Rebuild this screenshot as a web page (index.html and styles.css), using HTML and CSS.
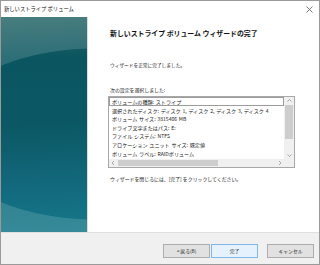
FILE: index.html
```html
<!DOCTYPE html>
<html lang="ja">
<head>
    <meta charset="UTF-8">
    <title>新しいストライプ ボリューム</title>
    <link rel="stylesheet" href="styles.css">
</head>
<body>
    <div class="window">
        <div class="titlebar">
            <span class="title">新しいストライプ ボリューム</span>
            <svg class="close" width="7" height="7" viewBox="0 0 7 7">
                <path d="M0.5 0.5 L6.5 6.5 M6.5 0.5 L0.5 6.5" stroke="#555" stroke-width="0.8" fill="none"/>
            </svg>
        </div>

        <div class="main">
            <div class="side"></div>
            <div class="content">
                <h1 class="heading">新しいストライプ ボリューム ウィザードの完了</h1>
                <p class="text done">ウィザードを正常に完了しました。</p>
                <p class="text chosen">次の設定を選択しました:</p>

                <div class="listbox">
                    <ul class="items">
                        <li class="item focused">ボリュームの種類: ストライプ</li>
                        <li class="item">選択されたディスク: ディスク 1, ディスク 2, ディスク 3, ディスク 4</li>
                        <li class="item">ボリューム サイズ: 3815406 MB</li>
                        <li class="item">ドライブ文字またはパス: E:</li>
                        <li class="item">ファイル システム: NTFS</li>
                        <li class="item">アロケーション ユニット サイズ: 既定値</li>
                        <li class="item">ボリューム ラベル: RAIDボリューム</li>
                    </ul>
                    <div class="vscroll">
                        <svg class="arrow" width="9" height="7" viewBox="0 0 9 7">
                            <path d="M2.5 4.5 L4.5 2.5 L6.5 4.5" stroke="#8a8a8a" stroke-width="0.7" fill="none"/>
                        </svg>
                        <div class="vtrack"><div class="vthumb"></div></div>
                        <svg class="arrow" width="9" height="7" viewBox="0 0 9 7">
                            <path d="M2.5 2.5 L4.5 4.5 L6.5 2.5" stroke="#8a8a8a" stroke-width="0.7" fill="none"/>
                        </svg>
                    </div>
                    <div class="hscroll">
                        <svg class="arrow" width="9" height="8" viewBox="0 0 9 8">
                            <path d="M5 2 L3 4 L5 6" stroke="#8a8a8a" stroke-width="0.7" fill="none"/>
                        </svg>
                        <div class="htrack"><div class="hthumb"></div></div>
                        <svg class="arrow" width="9" height="8" viewBox="0 0 9 8">
                            <path d="M4 2 L6 4 L4 6" stroke="#8a8a8a" stroke-width="0.7" fill="none"/>
                        </svg>
                    </div>
                    <div class="corner"></div>
                </div>

                <p class="text closing">ウィザードを閉じるには、[完了] をクリックしてください。</p>
            </div>
        </div>

        <div class="footer">
            <button class="btn">&lt; 戻る(B)</button>
            <button class="btn primary">完了</button>
            <button class="btn cancel">キャンセル</button>
        </div>
    </div>
</body>
</html>
```

FILE: styles.css
```css
* {
    box-sizing: border-box;
}

body {
    margin: 0;
    font-family: "Noto Sans CJK JP", "Noto Sans", sans-serif;
    color: #1a1a1a;
    background: #fff;
}

.window {
    width: 320px;
    height: 265px;
    border: 1px solid #9a9a9a;
    display: flex;
    flex-direction: column;
    background: #fff;
}

.titlebar {
    height: 16px;
    display: flex;
    align-items: center;
    justify-content: space-between;
    padding: 0 6px 0 3px;
}

.title {
    font-size: 5.3px;
    line-height: 16px;
    color: #111;
}

.main {
    flex: 1;
    display: flex;
}

.side {
    width: 87px;
    border-right: 1px solid #dcdcdc;
    background:
        radial-gradient(ellipse 158px 86px at 95px 117px, rgba(255,255,255,0) 99%, rgba(200,225,225,0.18) 100%),
        linear-gradient(178deg, #2c6769 0%, #0a5560 20%, #0b5864 50%, #136a7e 80%, #157889 100%);
}

.content {
    flex: 1;
    padding: 12px 0 0 22px;
}

.heading {
    margin: 0;
    font-size: 6.9px;
    line-height: 9px;
    font-weight: bold;
    color: #111;
}

.text {
    margin: 0;
    font-size: 4.9px;
    line-height: 8px;
    color: #1a1a1a;
}

.done {
    margin-top: 23px;
    font-size: 4.7px;
}

.chosen {
    margin-top: 17px;
}

.listbox {
    margin: 2px 0 0 -2px;
    width: 187px;
    height: 72px;
    border: 1px solid #a8a8a8;
    display: grid;
    grid-template-columns: 1fr 10px;
    grid-template-rows: 1fr 8px;
    background: #fff;
}

.items {
    list-style: none;
    margin: 0;
    padding: 0;
    overflow: hidden;
}

.item {
    font-size: 5.1px;
    line-height: 7px;
    height: 8.6px;
    padding-left: 2px;
    word-spacing: 0.6px;
    white-space: nowrap;
    border: 1px solid transparent;
    color: #1a1a1a;
}

.item.focused {
    border-color: #9c9c9c;
}

.vscroll {
    background: #f0f0f0;
    display: flex;
    flex-direction: column;
    align-items: center;
}

.vtrack {
    flex: 1;
    width: 100%;
}

.vthumb {
    margin: 1px 1px 0;
    height: 34px;
    background: #cdcdcd;
}

.hscroll {
    background: #f0f0f0;
    display: flex;
    align-items: center;
}

.htrack {
    flex: 1;
    height: 100%;
    padding: 1px 0;
}

.hthumb {
    width: 100px;
    height: 100%;
    background: #cdcdcd;
}

.arrow {
    flex: none;
    display: block;
}

.corner {
    background: #f0f0f0;
}

.closing {
    margin-top: 7px;
}

.footer {
    height: 32px;
    background: #f0f0f0;
    border-top: 1px solid #dfdfdf;
    display: flex;
    align-items: center;
    justify-content: flex-end;
    padding: 4px 5px 0 0;
}

.btn {
    width: 47px;
    height: 14px;
    padding: 0;
    font-family: inherit;
    font-size: 4.8px;
    color: #222;
    background: #e1e1e1;
    border: 1px solid #adadad;
}

.btn.primary {
    margin-left: 1px;
    background: #e5f1fb;
    border-color: #7fb8ea;
}

.btn.cancel {
    margin-left: 9px;
}
```
